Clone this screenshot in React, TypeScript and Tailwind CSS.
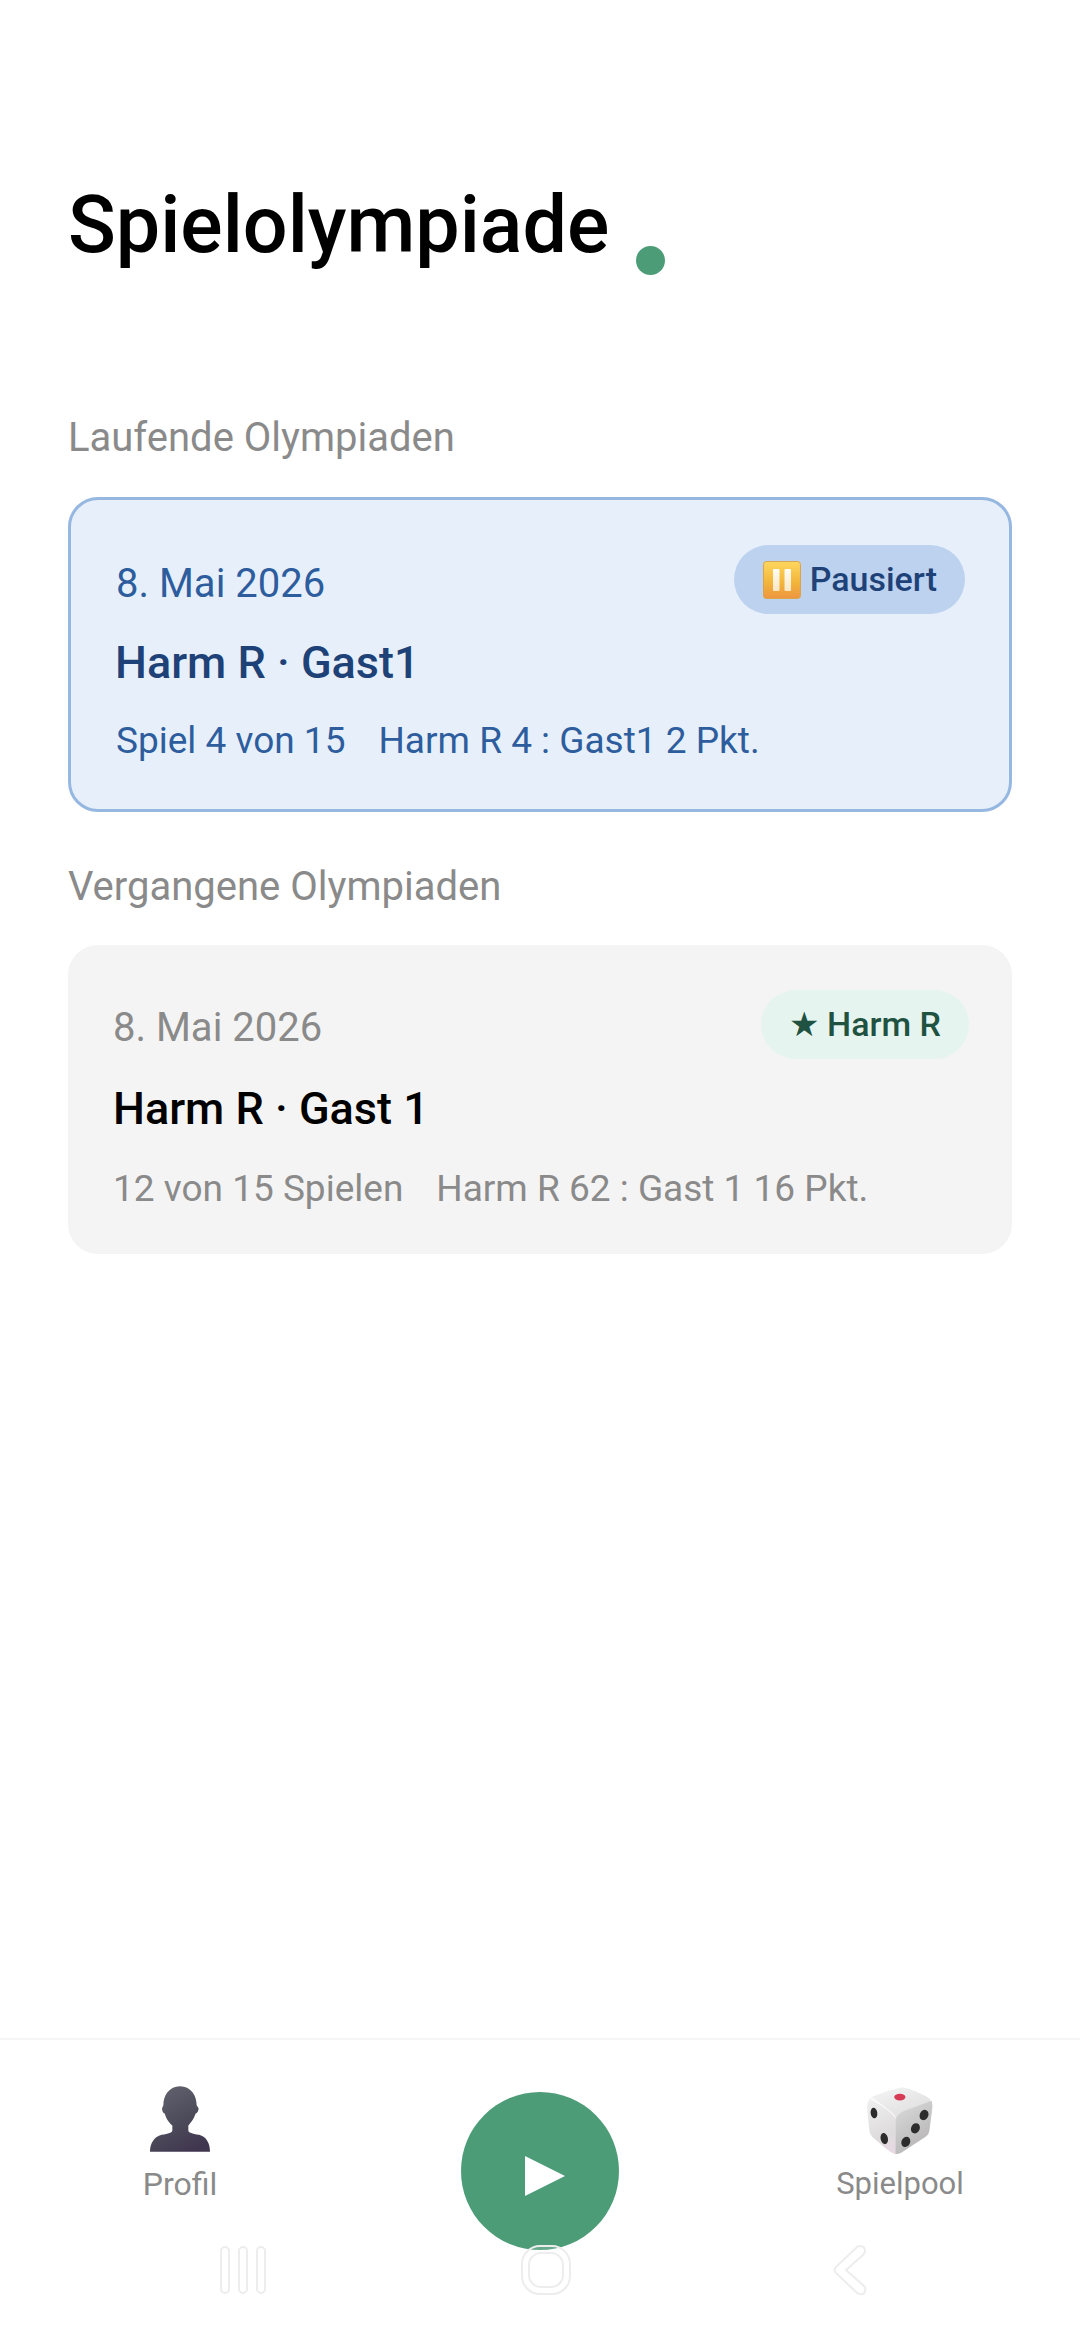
import React from "react";

function PauseEmoji() {
  return (
    <svg width="38" height="38" viewBox="0 0 38 38" className="shrink-0">
      <defs>
        <linearGradient id="pauseBg" x1="0" y1="0" x2="0" y2="1">
          <stop offset="0" stopColor="#ffd75e" />
          <stop offset="0.6" stopColor="#f2b33a" />
          <stop offset="1" stopColor="#ee9540" />
        </linearGradient>
        <linearGradient id="pauseBar" x1="0" y1="0" x2="0" y2="1">
          <stop offset="0" stopColor="#fffdf5" />
          <stop offset="1" stopColor="#f7e7c4" />
        </linearGradient>
      </defs>
      <rect x="0.5" y="0.5" width="37" height="37" rx="3" fill="url(#pauseBg)" stroke="#d9a44c" />
      <rect x="10" y="8" width="6.5" height="22" rx="1" fill="url(#pauseBar)" />
      <rect x="21.5" y="8" width="6.5" height="22" rx="1" fill="url(#pauseBar)" />
    </svg>
  );
}

function PersonIcon() {
  return (
    <svg width="60" height="66" viewBox="148 78 180 197">
      <defs>
        <linearGradient id="personFill" x1="0.2" y1="0" x2="0.7" y2="1">
          <stop offset="0" stopColor="#62626f" />
          <stop offset="0.55" stopColor="#4c4b5a" />
          <stop offset="1" stopColor="#40364f" />
        </linearGradient>
      </defs>
      <path
        fill="url(#personFill)"
        d="M238 78C270 78 288 105 288 135L294 145Q292 158 285 160C278 180 268 190 263 196L263 210C263 218 275 220 295 224C318 230 328 250 328 275L148 275C148 250 160 230 183 224C203 220 215 218 215 210L215 196C208 190 198 180 192 160Q185 158 184 145L188 135C188 105 206 78 238 78Z"
      />
    </svg>
  );
}

function DiceIcon() {
  return (
    <svg width="68" height="70" viewBox="135 72 205 210">
      <defs>
        <linearGradient id="dieLeft" x1="0" y1="0" x2="0.4" y2="1">
          <stop offset="0" stopColor="#f6f6f6" />
          <stop offset="0.7" stopColor="#dedcdc" />
          <stop offset="1" stopColor="#e9d8e4" />
        </linearGradient>
        <linearGradient id="dieRight" x1="0.2" y1="0" x2="0.7" y2="1">
          <stop offset="0" stopColor="#d9d9d9" />
          <stop offset="1" stopColor="#b4b2b3" />
        </linearGradient>
      </defs>
      <path
        fill="url(#dieLeft)"
        d="M245 75Q285 84 320 105Q335 115 335 135L326 205Q325 218 312 226L242 272Q230 280 216 274Q205 268 190 256L155 226Q146 218 145 205L138 135Q138 112 158 102Q200 84 245 75Z"
      />
      <path fill="url(#dieRight)" d="M225 170Q230 155 250 147L333 116Q335 125 335 135L326 205Q325 218 312 226L242 272Q232 278 224 276Z" />
      <path fill="#ffffff" opacity="0.75" d="M150 104Q200 138 222 160L226 172Q210 145 150 112Z" />
      <ellipse cx="237" cy="105" rx="17" ry="10" fill="#d63a54" />
      <ellipse cx="159" cy="153" rx="10" ry="16" fill="#2c2c2c" transform="rotate(-8 159 153)" />
      <ellipse cx="190" cy="230" rx="11" ry="17" fill="#2c2c2c" transform="rotate(-12 190 230)" />
      <ellipse cx="310" cy="159" rx="13" ry="16" fill="#2c2c2c" transform="rotate(25 310 159)" />
      <ellipse cx="284" cy="199" rx="13" ry="16" fill="#2c2c2c" transform="rotate(25 284 199)" />
      <ellipse cx="255" cy="240" rx="13" ry="16" fill="#2c2c2c" transform="rotate(25 255 240)" />
    </svg>
  );
}

function SystemBar() {
  return (
    <div className="relative z-10 flex h-[52px] items-center">
      <svg width="46" height="50" viewBox="0 0 46 50" className="ml-[220px]" fill="none" stroke="#ededed" strokeWidth="2">
        <rect x="1" y="2" width="8" height="46" rx="4" />
        <rect x="19" y="2" width="8" height="46" rx="4" />
        <rect x="37" y="2" width="8" height="46" rx="4" />
      </svg>
      <svg width="52" height="52" viewBox="0 0 52 52" className="ml-[254px]" fill="none" stroke="#ededed" strokeWidth="2">
        <rect x="2" y="2" width="48" height="48" rx="18" fillOpacity="0.15" fill="#ffffff" />
        <rect x="9" y="9" width="34" height="34" rx="12" />
      </svg>
      <svg width="36" height="52" viewBox="0 0 36 52" className="ml-[260px]" fill="none" stroke="#ededed" strokeWidth="2">
        <path d="M28 2Q33 2 33 7Q33 9 31 11L14 26L32 42Q34 45 33 47Q32 51 28 50Q26 50 24 48L4 29Q1 26 4 23L24 4Q26 2 28 2Z" />
      </svg>
    </div>
  );
}

export default function App() {
  return (
    <div className="flex h-[2340px] w-[1080px] flex-col bg-white font-['Roboto',sans-serif]">
      <main className="flex-1 px-[68px] pt-[173px]">
        <div className="flex items-end">
          <h1 className="text-[79px] leading-[104px] font-medium text-black">Spielolympiade</h1>
          <span className="mb-[2px] ml-[27px] h-[29px] w-[29px] rounded-full bg-[#4c9c78]" />
        </div>

        <h2 className="mt-[136px] text-[40px] leading-[50px] text-[#8a8a8a]">Laufende Olympiaden</h2>
        <section className="mt-[34px] h-[315px] rounded-[30px] border-[3px] border-[#95b7e0] bg-[#e7f0fa] pr-[44px] pl-[45px]">
          <div className="flex items-start justify-between pt-[45px]">
            <span className="pt-[14px] text-[40px] leading-[50px] text-[#2e5d9e]">8. Mai 2026</span>
            <span className="flex h-[69px] items-center gap-[9px] rounded-full bg-[#bcd2ef] pr-[28px] pl-[29px] text-[34px] font-medium text-[#1e4278]">
              <PauseEmoji />
              Pausiert
            </span>
          </div>
          <div className="mt-[20px] -ml-[1px] text-[45px] leading-[58px] font-medium text-[#1e4278]">Harm R · Gast1</div>
          <div className="mt-[25px] flex gap-[33px] text-[37px] leading-[48px] text-[#2e5d9e]">
            <span>Spiel 4 von 15</span>
            <span>Harm R 4 : Gast1 2 Pkt.</span>
          </div>
        </section>

        <h2 className="mt-[50px] text-[40px] leading-[50px] text-[#8a8a8a]">Vergangene Olympiaden</h2>
        <section className="mt-[33px] h-[309px] rounded-[30px] bg-[#f4f4f4] pr-[43px] pl-[45px]">
          <div className="flex items-start justify-between pt-[45px]">
            <span className="pt-[13px] text-[40px] leading-[50px] text-[#8a8a8a]">8. Mai 2026</span>
            <span className="flex h-[69px] items-center gap-[8px] rounded-full bg-[#e5f4ee] px-[28px] text-[34px] font-medium text-[#1f5240]">
              ★ Harm R
            </span>
          </div>
          <div className="mt-[21px] text-[45px] leading-[58px] font-medium text-black">Harm R · Gast 1</div>
          <div className="mt-[27px] flex gap-[33px] text-[37px] leading-[48px] text-[#8a8a8a]">
            <span>12 von 15 Spielen</span>
            <span>Harm R 62 : Gast 1 16 Pkt.</span>
          </div>
        </section>
      </main>

      <footer className="relative h-[302px] border-t-2 border-[#f5f5f5] bg-white">
        <div className="flex items-start justify-between pt-[46px] pr-[110px] pl-[120px]">
          <div className="flex w-[120px] flex-col items-center">
            <PersonIcon />
            <span className="mt-[11px] text-[32px] leading-[42px] text-[#8a8a8a]">Profil</span>
          </div>
          <div className="flex w-[140px] flex-col items-center">
            <DiceIcon />
            <span className="mt-[7px] text-[31px] leading-[42px] text-[#8a8a8a]">Spielpool</span>
          </div>
        </div>
        <div className="mt-[39px]">
          <SystemBar />
        </div>
        <button className="absolute top-[52px] left-[461px] flex h-[158px] w-[158px] items-center justify-center rounded-full bg-[#4c9c78]">
          <svg width="40" height="40" viewBox="0 0 40 40" className="mt-[10px] ml-[10px]">
            <path d="M0 0L40 20L0 40Z" fill="#ffffff" />
          </svg>
        </button>
      </footer>
    </div>
  );
}
